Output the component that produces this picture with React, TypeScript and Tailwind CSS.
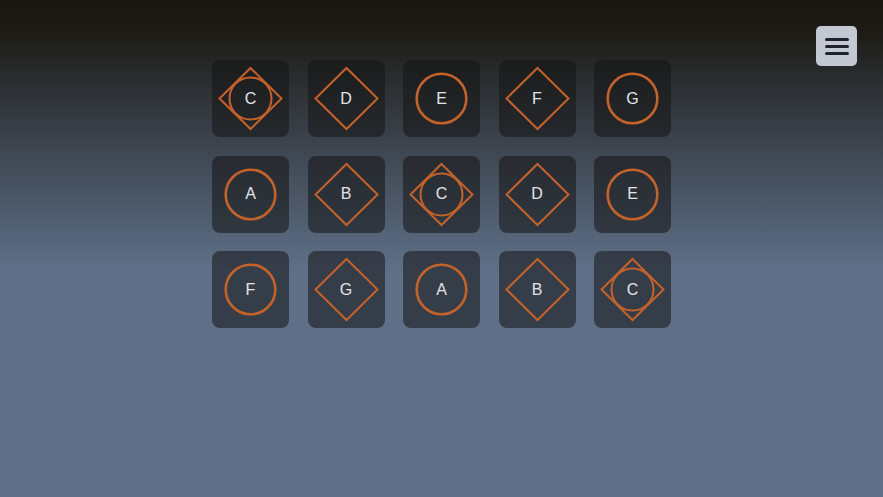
type Shape = 'circle' | 'diamond' | 'both'

interface Note {
  label: string
  shape: Shape
}

const notes: Note[] = [
  { label: 'C', shape: 'both' },
  { label: 'D', shape: 'diamond' },
  { label: 'E', shape: 'circle' },
  { label: 'F', shape: 'diamond' },
  { label: 'G', shape: 'circle' },
  { label: 'A', shape: 'circle' },
  { label: 'B', shape: 'diamond' },
  { label: 'C', shape: 'both' },
  { label: 'D', shape: 'diamond' },
  { label: 'E', shape: 'circle' },
  { label: 'F', shape: 'circle' },
  { label: 'G', shape: 'diamond' },
  { label: 'A', shape: 'circle' },
  { label: 'B', shape: 'diamond' },
  { label: 'C', shape: 'both' },
]

const ORANGE = '#c4622b'

function NoteTile({ label, shape }: Note) {
  return (
    <div className="relative w-[77px] h-[77px] rounded-lg bg-[#141414]/55 flex items-center justify-center">
      <svg className="absolute inset-0" width="77" height="77" viewBox="0 0 77 77" fill="none">
        {shape !== 'circle' && (
          <polygon
            points="38.5,8 69.5,38.5 38.5,69 7.5,38.5"
            stroke={ORANGE}
            strokeWidth="2"
            strokeLinejoin="miter"
          />
        )}
        {shape === 'circle' && <circle cx="38.5" cy="38.5" r="24.8" stroke={ORANGE} strokeWidth="2.6" />}
        {shape === 'both' && <circle cx="38.5" cy="38.5" r="21" stroke={ORANGE} strokeWidth="2" />}
      </svg>
      <span className="relative text-[16px] leading-none text-[#e2e5ea] font-['Liberation_Sans',Arial,sans-serif]">
        {label}
      </span>
    </div>
  )
}

export default function App() {
  return (
    <div className="relative w-full min-h-[497px] h-screen overflow-hidden bg-[linear-gradient(to_bottom,#19160f_0%,#1d1c17_7%,#2c2f32_17%,#5e6f87_54%,#5e6f87_100%)]">
      {/* Menu button */}
      <button className="absolute top-[26px] right-[26px] w-[41px] h-[40px] rounded-[5px] bg-[#c3c8d3] flex flex-col items-center justify-center gap-[4px]">
        <span className="block w-[24px] h-[3px] rounded-sm bg-[#1f2329]" />
        <span className="block w-[24px] h-[3px] rounded-sm bg-[#1f2329]" />
        <span className="block w-[24px] h-[3px] rounded-sm bg-[#1f2329]" />
      </button>

      {/* Note grid */}
      <div className="flex justify-center pt-[60px]">
        <div className="grid grid-cols-5 gap-[18.5px]">
          {notes.map((n, i) => (
            <NoteTile key={i} {...n} />
          ))}
        </div>
      </div>
    </div>
  )
}
